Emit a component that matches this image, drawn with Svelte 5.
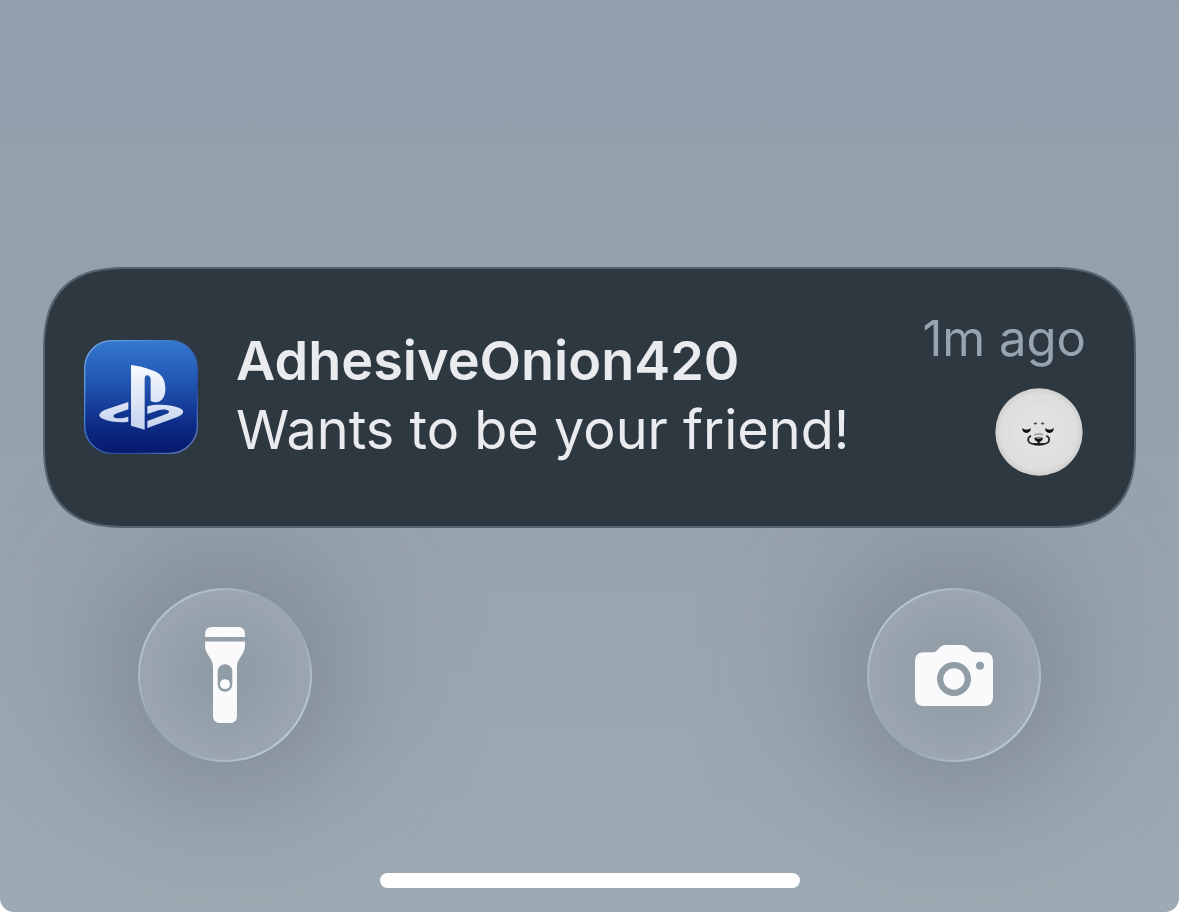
<script lang="ts">
    interface Notification {
        title: string;
        message: string;
        time: string;
    }

    const notification: Notification = {
        title: "AdhesiveOnion420",
        message: "Wants to be your friend!",
        time: "1m ago",
    };
</script>

<main class="lock-screen">
    <article class="notification">
        <svg class="app-icon" viewBox="30 30 342 342" role="img" aria-label="PlayStation">
            <defs>
                <linearGradient id="app-bg" x1="0" y1="0" x2="0" y2="1">
                    <stop offset="0" stop-color="#3478cf" />
                    <stop offset="0.35" stop-color="#2258b3" />
                    <stop offset="0.75" stop-color="#0d2b86" />
                    <stop offset="1" stop-color="#07196b" />
                </linearGradient>
                <linearGradient id="app-rim" x1="0" y1="0" x2="1" y2="1">
                    <stop offset="0" stop-color="#7db0ee" />
                    <stop offset="0.4" stop-color="#3f77c8" />
                    <stop offset="0.7" stop-color="#24459a" />
                    <stop offset="1" stop-color="#6f8cc9" />
                </linearGradient>
                <linearGradient id="app-logo" x1="0" y1="105" x2="0" y2="299" gradientUnits="userSpaceOnUse">
                    <stop offset="0" stop-color="#f7faff" />
                    <stop offset="1" stop-color="#c6d3ee" />
                </linearGradient>
            </defs>
            <rect x="32" y="32" width="338" height="338" rx="82" fill="url(#app-bg)" stroke="url(#app-rim)" stroke-width="4" />
            <g fill="url(#app-logo)">
                <path d="M171 105V287L212 299V146C212 138 216 134 222 136C228 138 230 143 230 150V213C254 224 274 210 274 177C274 144 261 130 232 120C213 113 189 107 171 105Z" />
                <path d="M163 216L100 237C72 247 69 259 88 267C110 276 140 279 163 275V260L151 263C139 266 123 266 119 261C116 256 122 252 133 248L163 238Z" />
                <path d="M220 229C250 221 290 224 314 233C334 241 331 251 312 260L220 294V273L277 252C289 247 287 241 276 239C266 238 256 240 247 243L220 252Z" />
            </g>
        </svg>

        <div class="content">
            <h1>{notification.title}</h1>
            <p>{notification.message}</p>
        </div>

        <div class="meta">
            <time>{notification.time}</time>
            <svg class="avatar" viewBox="28 28 266 266" role="img" aria-label="Avatar">
                <defs>
                    <radialGradient id="face">
                        <stop offset="0" stop-color="#e3e2e3" />
                        <stop offset="0.86" stop-color="#dfdedf" />
                        <stop offset="1" stop-color="#d0cfce" />
                    </radialGradient>
                </defs>
                <circle cx="161" cy="161" r="132" fill="url(#face)" />
                <circle cx="161" cy="158" r="80" fill="#e2e1e2" />
                <ellipse cx="150" cy="135" rx="5" ry="3" fill="#444" />
                <ellipse cx="172" cy="135" rx="5" ry="3" fill="#444" />
                <path d="M110 149Q116 154 123 154Q130 154 136 150C137 158 131 164 123 164C115 164 110 158 110 149Z" fill="#111" />
                <path d="M180 150Q186 154 193 154Q200 154 206 149C206 158 201 164 193 164C185 164 179 158 180 150Z" fill="#111" />
                <path d="M146 170Q160 164 174 170" fill="none" stroke="#999" stroke-width="4" />
                <path d="M137 172C124 178 125 193 142 197Q160 201 178 197C195 193 196 178 183 172" fill="none" stroke="#222" stroke-width="5" />
                <path d="M147 179Q160 174 173 179C173 186 166 191 160 191C154 191 147 186 147 179Z" fill="#111" />
                <path d="M160 187V197M146 198H174" fill="none" stroke="#111" stroke-width="6" />
                <ellipse cx="160" cy="180" rx="7" ry="2" fill="#999" />
            </svg>
        </div>
    </article>

    <div class="shortcuts">
        <button type="button" aria-label="Flashlight">
            <svg class="flashlight" viewBox="240 155 120 289">
                <path d="M240 185V176Q240 155 261 155H339Q360 155 360 176V185Z" />
                <path fill-rule="evenodd" d="M240 199H360V213C360 237 336 250 336 274V424Q336 444 316 444H284Q264 444 264 424V274C264 250 240 237 240 213ZM300 267A22 22 0 0 0 278 289V328A22 22 0 0 0 322 328V289A22 22 0 0 0 300 267Z" />
                <circle cx="300" cy="327" r="15" />
            </svg>
        </button>
        <button type="button" aria-label="Camera">
            <svg class="camera" viewBox="180 207 234 183">
                <path fill-rule="evenodd" d="M206 229H234C250 229 250 207 272 207H320C342 207 344 229 360 229H388Q414 229 414 255V364Q414 390 388 390H206Q180 390 180 364V255Q180 229 206 229ZM297 258A51 51 0 1 0 297 360A51 51 0 1 0 297 258ZM375 257A12 12 0 1 0 375 281A12 12 0 1 0 375 257Z" />
                <circle cx="297" cy="309" r="32" />
            </svg>
        </button>
    </div>

    <div class="home-indicator"></div>
</main>

<style>
:global(body){
    margin: 0;
    background: #fff;
}
.lock-screen{
    box-sizing: border-box;
    display: flex;
    flex-direction: column;
    justify-content: flex-end;
    min-height: 100vh;
    padding: 44px 43px 24px;
    overflow: hidden;
    border-radius: 0 0 14px 14px;
    background: linear-gradient(#919fac, #96a2ae 50%, #9eaab3);
    font-family: Inter, "Liberation Sans", sans-serif;
}
.notification{
    position: relative;
    z-index: 1;
    box-sizing: border-box;
    display: flex;
    align-items: center;
    gap: 38px;
    min-height: 261px;
    padding: 0 48px 2px 39px;
    border: 2px solid #56636d;
    border-radius: 78px;
    background: #2e3840;
}
@supports (corner-shape: superellipse(1.4)){
    .notification{
        border-radius: 86px;
        corner-shape: superellipse(1.4);
    }
}
.app-icon{
    flex: none;
    width: 114px;
    height: 114px;
}
.content{
    flex: 1;
    min-width: 0;
    padding-bottom: 4px;
    color: #e9ebef;
    font-size: 54px;
    line-height: 69px;
}
h1, p{
    margin: 0;
    font-size: inherit;
}
h1{
    font-weight: 600;
}
.meta{
    display: flex;
    flex-direction: column;
    align-items: flex-end;
    gap: 18px;
    padding-bottom: 10px;
}
time{
    color: #98a4af;
    font-size: 49px;
    line-height: 62px;
    white-space: nowrap;
}
.avatar{
    width: 88px;
    height: 88px;
    margin-right: 3px;
}
.shortcuts{
    display: flex;
    justify-content: space-between;
    margin: 60px 95px 111px;
}
button{
    display: flex;
    align-items: center;
    justify-content: center;
    width: 174px;
    height: 174px;
    padding: 0;
    border: 2px solid transparent;
    border-radius: 50%;
    background:
        radial-gradient(circle, #909ca6 20%, #9ba6b0 70%) padding-box,
        linear-gradient(135deg, #b5c7d1 14%, #9aa8b2 40%, #9aa8b2 60%, #b9ccd6 86%) border-box;
    box-shadow: 0 0 130px 30px rgba(102, 111, 121, 0.57);
}
button svg{
    fill: #fafafc;
}
.flashlight{
    width: 40px;
    height: 96px;
}
.camera{
    width: 78px;
    height: 61px;
}
.home-indicator{
    align-self: center;
    width: 420px;
    max-width: 100%;
    height: 15px;
    border-radius: 8px;
    background: #fff;
}
</style>
